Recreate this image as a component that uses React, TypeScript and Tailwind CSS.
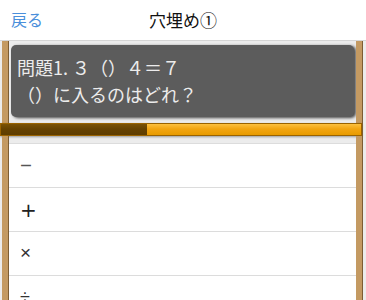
import React from "react";

const font = { fontFamily: '"Noto Sans CJK JP", "Noto Sans", sans-serif' };

function LeftStrip() {
  return (
    <div className="ml-[2px] flex w-[7px] shrink-0">
      <div className="w-[6px] bg-[#c49a62]" />
      <div className="w-[1px] bg-[#7d5d33]" />
    </div>
  );
}

function RightStrip() {
  return (
    <div className="mr-[3px] flex w-[7px] shrink-0">
      <div className="w-[6px] bg-[#c49a62]" />
      <div className="w-[1px] bg-[#7d5d33]" />
    </div>
  );
}

const options = [
  { t: "−", c: "font-['Noto_Sans'] text-[21px] text-[#555]" },
  { t: "+", c: "font-['DejaVu_Sans'] text-[20px] text-[#222]" },
  { t: "×", c: "font-['Liberation_Sans'] text-[19px] text-[#333]" },
  { t: "÷", c: "font-['Liberation_Sans'] text-[18px] text-[#333]" },
];

export default function App() {
  return (
    <div className="h-[300px] w-[366px] overflow-hidden bg-[#ececec]" style={font}>
      <div className="flex h-[41px] items-center border-b border-[#d6d6d6] bg-white">
        <div className="w-[80px] pl-[11px] pb-[2px] text-[16px] text-[#4a8fdb]">戻る</div>
        <div className="flex-1 text-center text-[17px] text-[#111]">穴埋め①</div>
        <div className="w-[80px]" />
      </div>

      <div className="flex">
        <LeftStrip />
        <div className="flex-1 px-[2px] pt-[4px] pb-[6px]">
          <div className="h-[72px] rounded-[5px] bg-[#5c5c5c] px-[6px] pt-[9px] text-[18px] leading-[27px] text-[#ececec] shadow-[2px_1px_3px_rgba(0,0,0,0.7)]">
            <div>問題1. ３（）４＝７</div>
            <div>（）に入るのはどれ？</div>
          </div>
        </div>
        <RightStrip />
      </div>

      <div className="flex h-[13px]">
        <div className="flex w-[362px] border border-[#9a6300] shadow-[0_1px_2px_rgba(0,0,0,0.35)]">
          <div className="w-[146px] bg-[linear-gradient(#7a5205,#664200_45%,#5e3d00)]" />
          <div className="flex-1 bg-[linear-gradient(#fcc040,#f2a512_45%,#e89b00)]" />
        </div>
        <div className="w-[1px] bg-[#7d5d33]" />
      </div>

      <div className="flex">
        <LeftStrip />
        <div className="flex-1 pt-[7px]">
          <div className="border-t border-[#dcdcdc] bg-white">
            {options.map((o, i) => (
              <div
                key={i}
                className="flex h-[44px] items-center border-b border-[#dcdcdc] pl-[11px]"
              >
                <span className={o.c}>{o.t}</span>
              </div>
            ))}
          </div>
        </div>
        <RightStrip />
      </div>
    </div>
  );
}
